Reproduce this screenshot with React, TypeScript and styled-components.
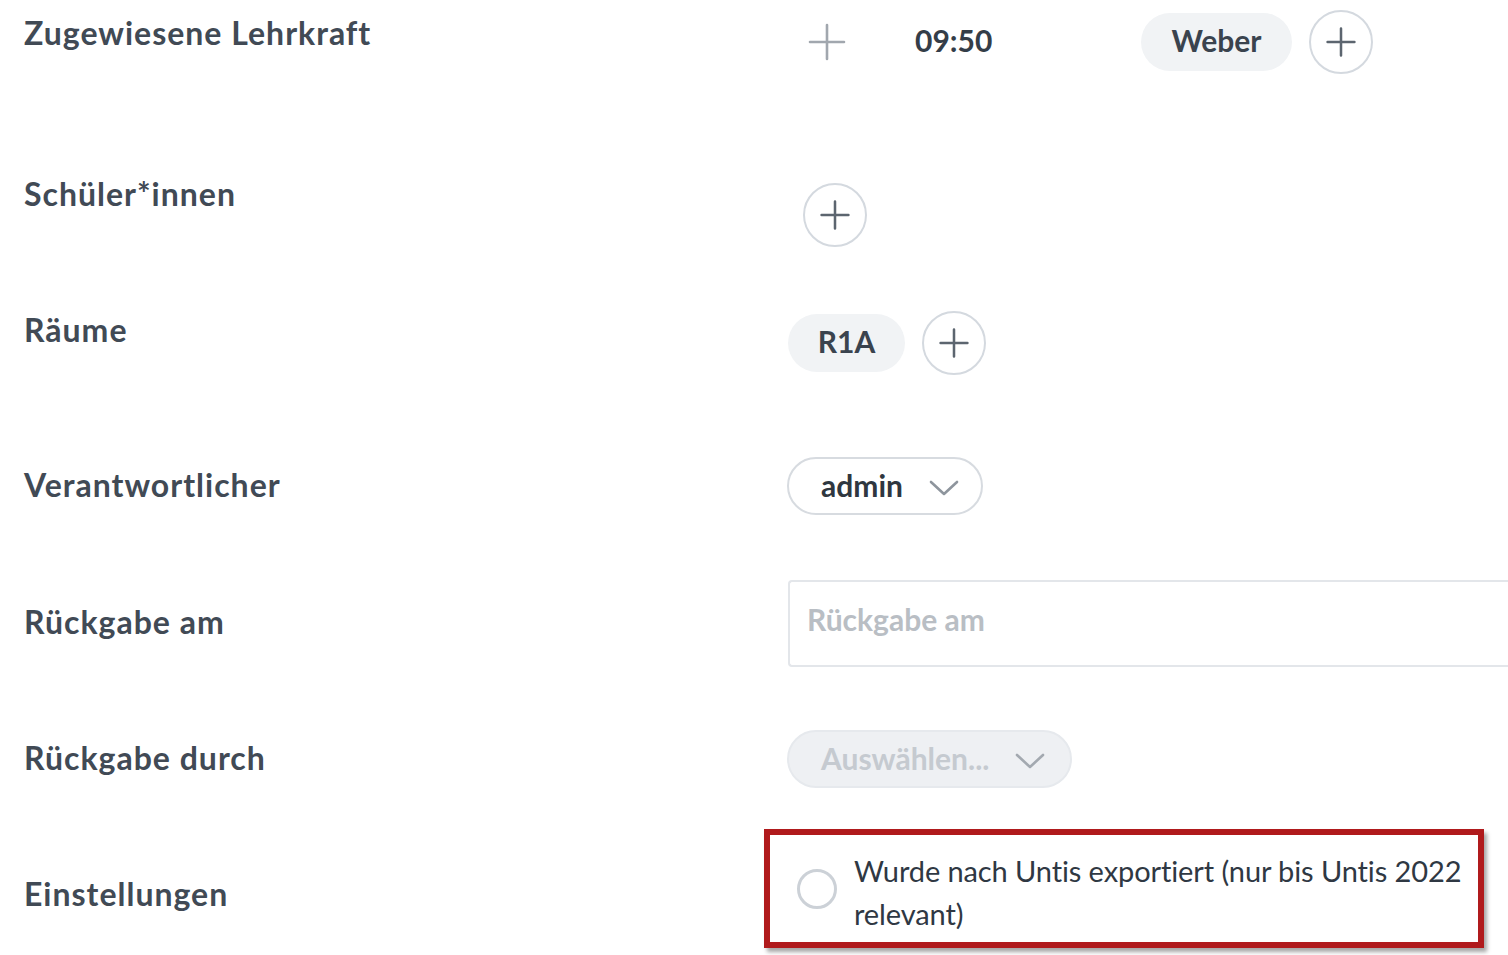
import React from "react";
import styled, { createGlobalStyle } from "styled-components";

const Global = createGlobalStyle`
  html, body { margin: 0; padding: 0; background: #ffffff; overflow: hidden; }
  body { font-family: Lato, "Open Sans", sans-serif; }
`;

const Page = styled.div`
  width: 1508px;
  height: 955px;
  padding: 10px 0 0 24px;
  box-sizing: border-box;
  display: flex;
  flex-direction: column;
  overflow: hidden;
`;

const Row = styled.div<{ $gap: number; $h: number }>`
  display: grid;
  grid-template-columns: 763px 1fr;
  grid-template-rows: ${(p) => p.$h}px;
  align-items: center;
  margin-top: ${(p) => p.$gap}px;
  height: ${(p) => p.$h}px;
  flex: none;
`;

const Label = styled.div<{ $shift: number }>`
  font-size: 32px;
  font-weight: 700;
  color: #414a55;
  line-height: 36px;
  letter-spacing: 1px;
  white-space: nowrap;
  margin-top: ${(p) => (p.$shift > 0 ? p.$shift * 2 : 0)}px;
  margin-bottom: ${(p) => (p.$shift < 0 ? -p.$shift * 2 : 0)}px;
`;

const Values = styled.div`
  display: flex;
  align-items: center;
  height: 100%;
`;

const Spacer = styled.div<{ $w: number }>`
  width: ${(p) => p.$w}px;
  flex: none;
`;

const Time = styled.span`
  font-size: 30px;
  font-weight: 700;
  color: #343d48;
  width: 75px;
  margin-bottom: 5px;
`;

const Pill = styled.div<{ $w: number }>`
  height: 58px;
  width: ${(p) => p.$w}px;
  border-radius: 29px;
  background: #f1f3f5;
  display: flex;
  align-items: center;
  justify-content: center;
  font-size: 30px;
  font-weight: 700;
  color: #3a434e;
  box-sizing: border-box;
  padding-bottom: 4px;
`;

const CircleButton = styled.button`
  width: 64px;
  height: 64px;
  border-radius: 50%;
  border: 2px solid #d4d9df;
  background: #ffffff;
  display: flex;
  align-items: center;
  justify-content: center;
  padding: 0;
  flex: none;
`;

const PlainPlus = styled.div`
  width: 38px;
  height: 38px;
  display: flex;
  align-items: center;
  justify-content: center;
  flex: none;
`;

const Select = styled.div<{ $w: number; $disabled?: boolean }>`
  width: ${(p) => p.$w}px;
  height: 58px;
  box-sizing: border-box;
  border-radius: 29px;
  border: 2px solid ${(p) => (p.$disabled ? "#e6e9ed" : "#d7dbe0")};
  background: ${(p) => (p.$disabled ? "#eef0f3" : "#ffffff")};
  display: flex;
  align-items: center;
  padding-left: 32px;
  padding-bottom: 3px;
  font-size: 30px;
  font-weight: 700;
  color: ${(p) => (p.$disabled ? "#c5cad0" : "#2f3740")};
  gap: 26px;
  svg { margin-top: 6px; }
`;

const TextInput = styled.div`
  width: 760px;
  height: 87px;
  box-sizing: border-box;
  border: 2px solid #e3e6ea;
  border-right: none;
  border-radius: 4px 0 0 4px;
  margin-left: 1px;
  display: flex;
  align-items: center;
  padding-left: 17px;
  font-size: 30px;
  font-weight: 700;
  color: #b9bec4;
  padding-bottom: 9px;
`;

const Highlight = styled.div`
  margin-left: -23px;
  width: 720px;
  height: 119px;
  box-sizing: border-box;
  border: 6px solid #b01a1c;
  box-shadow: 3px 4px 4px rgba(0, 0, 0, 0.35);
  display: flex;
  align-items: center;
  padding-left: 27px;
  gap: 17px;
`;

const Radio = styled.div`
  width: 40px;
  height: 40px;
  border-radius: 50%;
  border: 3px solid #ccd1d7;
  box-sizing: border-box;
  flex: none;
`;

const CheckText = styled.div`
  font-size: 29px;
  font-weight: 400;
  line-height: 43px;
  color: #2f3843;
  width: 625px;
  letter-spacing: -0.1px;
  margin-top: 6px;
`;

const Plus = ({ size, color, stroke }: { size: number; color: string; stroke: number }) => (
  <svg width={size} height={size} viewBox="0 0 38 38" fill="none">
    <path d="M19 2v34M2 19h34" stroke={color} strokeWidth={stroke} strokeLinecap="round" />
  </svg>
);

const Chevron = ({ color }: { color: string }) => (
  <svg width="30" height="18" viewBox="0 0 30 18" fill="none">
    <path d="M2 3l13 12L28 3" stroke={color} strokeWidth="2.6" strokeLinecap="round" strokeLinejoin="round" />
  </svg>
);

export default function App() {
  return (
    <>
      <Global />
      <Page>
        <Row $gap={0} $h={64}>
          <Label $shift={-9}>Zugewiesene Lehrkraft</Label>
          <Values>
            <Spacer $w={21} />
            <PlainPlus>
              <Plus size={38} color="#a1a7ae" stroke={2.6} />
            </PlainPlus>
            <Spacer $w={69} />
            <Time>09:50</Time>
            <Spacer $w={151} />
            <Pill $w={151}>Weber</Pill>
            <Spacer $w={17} />
            <CircleButton>
              <Plus size={30} color="#5c656f" stroke={3.2} />
            </CircleButton>
          </Values>
        </Row>

        <Row $gap={109} $h={64}>
          <Label $shift={-21}>Schüler*innen</Label>
          <Values>
            <Spacer $w={16} />
            <CircleButton>
              <Plus size={30} color="#5c656f" stroke={3.2} />
            </CircleButton>
          </Values>
        </Row>

        <Row $gap={64} $h={64}>
          <Label $shift={-13}>Räume</Label>
          <Values>
            <Spacer $w={1} />
            <Pill $w={117}>R1A</Pill>
            <Spacer $w={17} />
            <CircleButton>
              <Plus size={30} color="#5c656f" stroke={3.2} />
            </CircleButton>
          </Values>
        </Row>

        <Row $gap={82} $h={58}>
          <Label $shift={-1}>Verantwortlicher</Label>
          <Values>
            <Select $w={196}>
              admin
              <Chevron color="#8e959d" />
            </Select>
          </Values>
        </Row>

        <Row $gap={65} $h={87}>
          <Label $shift={-2}>Rückgabe am</Label>
          <Values>
            <TextInput>Rückgabe am</TextInput>
          </Values>
        </Row>

        <Row $gap={63} $h={58}>
          <Label $shift={-1}>Rückgabe durch</Label>
          <Values>
            <Select $w={285} $disabled>
              Auswählen...
              <Chevron color="#a3a9b0" />
            </Select>
          </Values>
        </Row>

        <Row $gap={41} $h={119}>
          <Label $shift={5}>Einstellungen</Label>
          <Values>
            <Highlight>
              <Radio />
              <CheckText>Wurde nach Untis exportiert (nur bis Untis 2022 relevant)</CheckText>
            </Highlight>
          </Values>
        </Row>
      </Page>
    </>
  );
}
